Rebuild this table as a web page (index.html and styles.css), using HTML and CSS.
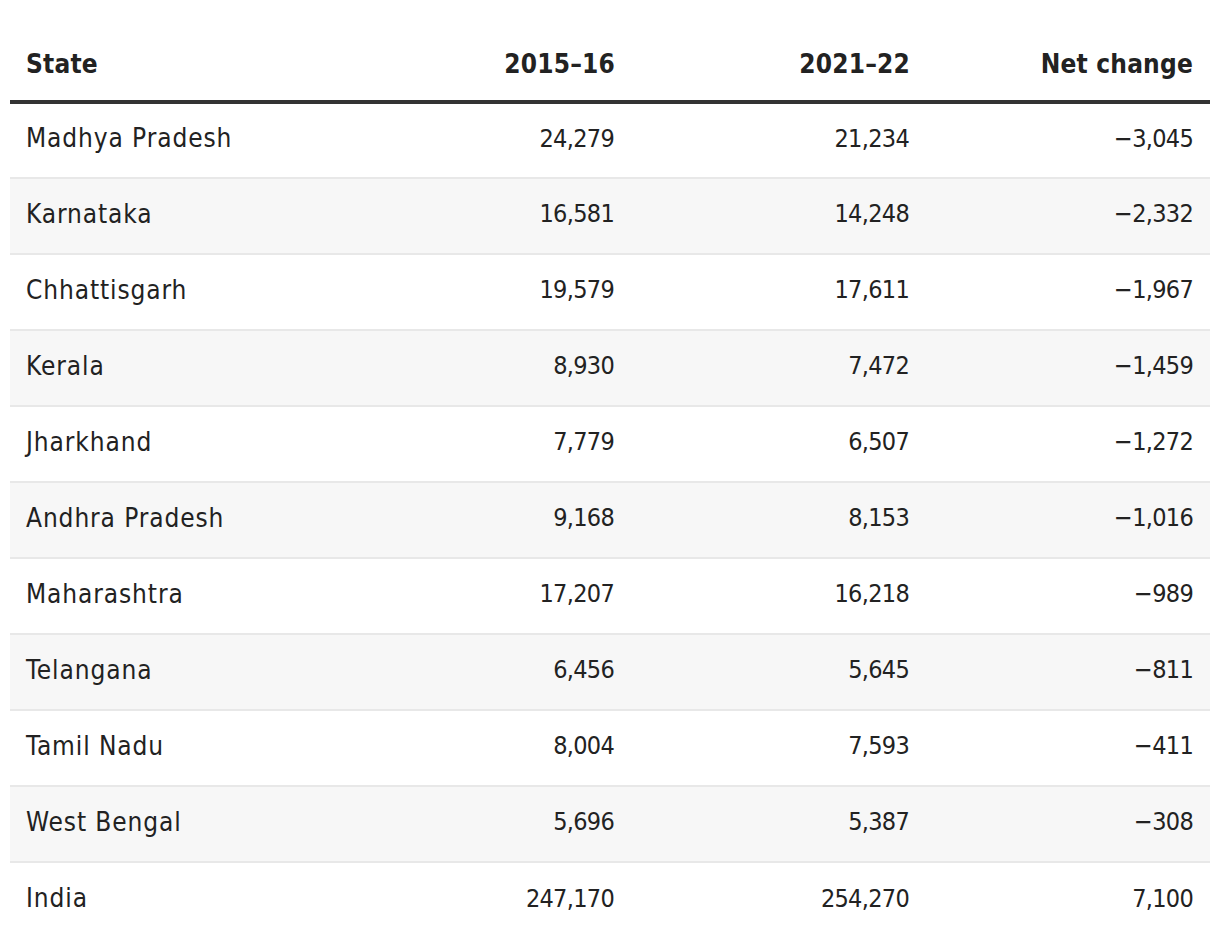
FILE: index.html
```html
<!DOCTYPE html>
<html>
<head>
<meta charset="utf-8">
<link rel="stylesheet" href="styles.css">
</head>
<body>
<table class="data">
  <colgroup>
    <col class="c1"><col class="c2"><col class="c3"><col class="c4">
  </colgroup>
  <thead>
    <tr><th class="l">State</th><th>2015–16</th><th>2021–22</th><th>Net change</th></tr>
  </thead>
  <tbody>
    <tr><td class="l">Madhya Pradesh</td><td>24,279</td><td>21,234</td><td>−3,045</td></tr>
    <tr><td class="l">Karnataka</td><td>16,581</td><td>14,248</td><td>−2,332</td></tr>
    <tr><td class="l">Chhattisgarh</td><td>19,579</td><td>17,611</td><td>−1,967</td></tr>
    <tr><td class="l">Kerala</td><td>8,930</td><td>7,472</td><td>−1,459</td></tr>
    <tr><td class="l">Jharkhand</td><td>7,779</td><td>6,507</td><td>−1,272</td></tr>
    <tr><td class="l">Andhra Pradesh</td><td>9,168</td><td>8,153</td><td>−1,016</td></tr>
    <tr><td class="l">Maharashtra</td><td>17,207</td><td>16,218</td><td>−989</td></tr>
    <tr><td class="l">Telangana</td><td>6,456</td><td>5,645</td><td>−811</td></tr>
    <tr><td class="l">Tamil Nadu</td><td>8,004</td><td>7,593</td><td>−411</td></tr>
    <tr><td class="l">West Bengal</td><td>5,696</td><td>5,387</td><td>−308</td></tr>
    <tr><td class="l">India</td><td>247,170</td><td>254,270</td><td>7,100</td></tr>
  </tbody>
</table>
</body>
</html>
```
FILE: styles.css
```css
html, body { margin: 0; padding: 0; background: #fff; }
body { padding: 0 10px; font-family: "DejaVu Sans Condensed", "DejaVu Sans", sans-serif; font-stretch: semi-condensed; color: #222; }
.data { width: 1200px; border-collapse: collapse; table-layout: fixed; }
.c1 { width: 326px; }
.c2 { width: 295px; }
.c3 { width: 295px; }
.c4 { width: 284px; }
.data th, .data td { padding: 0 16px; text-align: right; white-space: nowrap; box-sizing: border-box; vertical-align: middle; }
.data th { height: 102px; padding-top: 28px; font-size: 26px; font-weight: 700; border-bottom: 4px solid #333; letter-spacing: 0.2px; }
.data th.l { text-align: left; }
.data th:last-child { padding-right: 17px; }
.data td { height: 76px; padding-bottom: 5px; padding-right: 17px; font-size: 25px; letter-spacing: -0.7px; border-bottom: 2px solid #e8e8e8; }
.data td.l { text-align: left; font-size: 26px; letter-spacing: 0.9px; }
.data tbody tr:nth-child(even) td { background: #f7f7f7; }
.data tbody tr:last-child td { border-bottom: none; }
```
